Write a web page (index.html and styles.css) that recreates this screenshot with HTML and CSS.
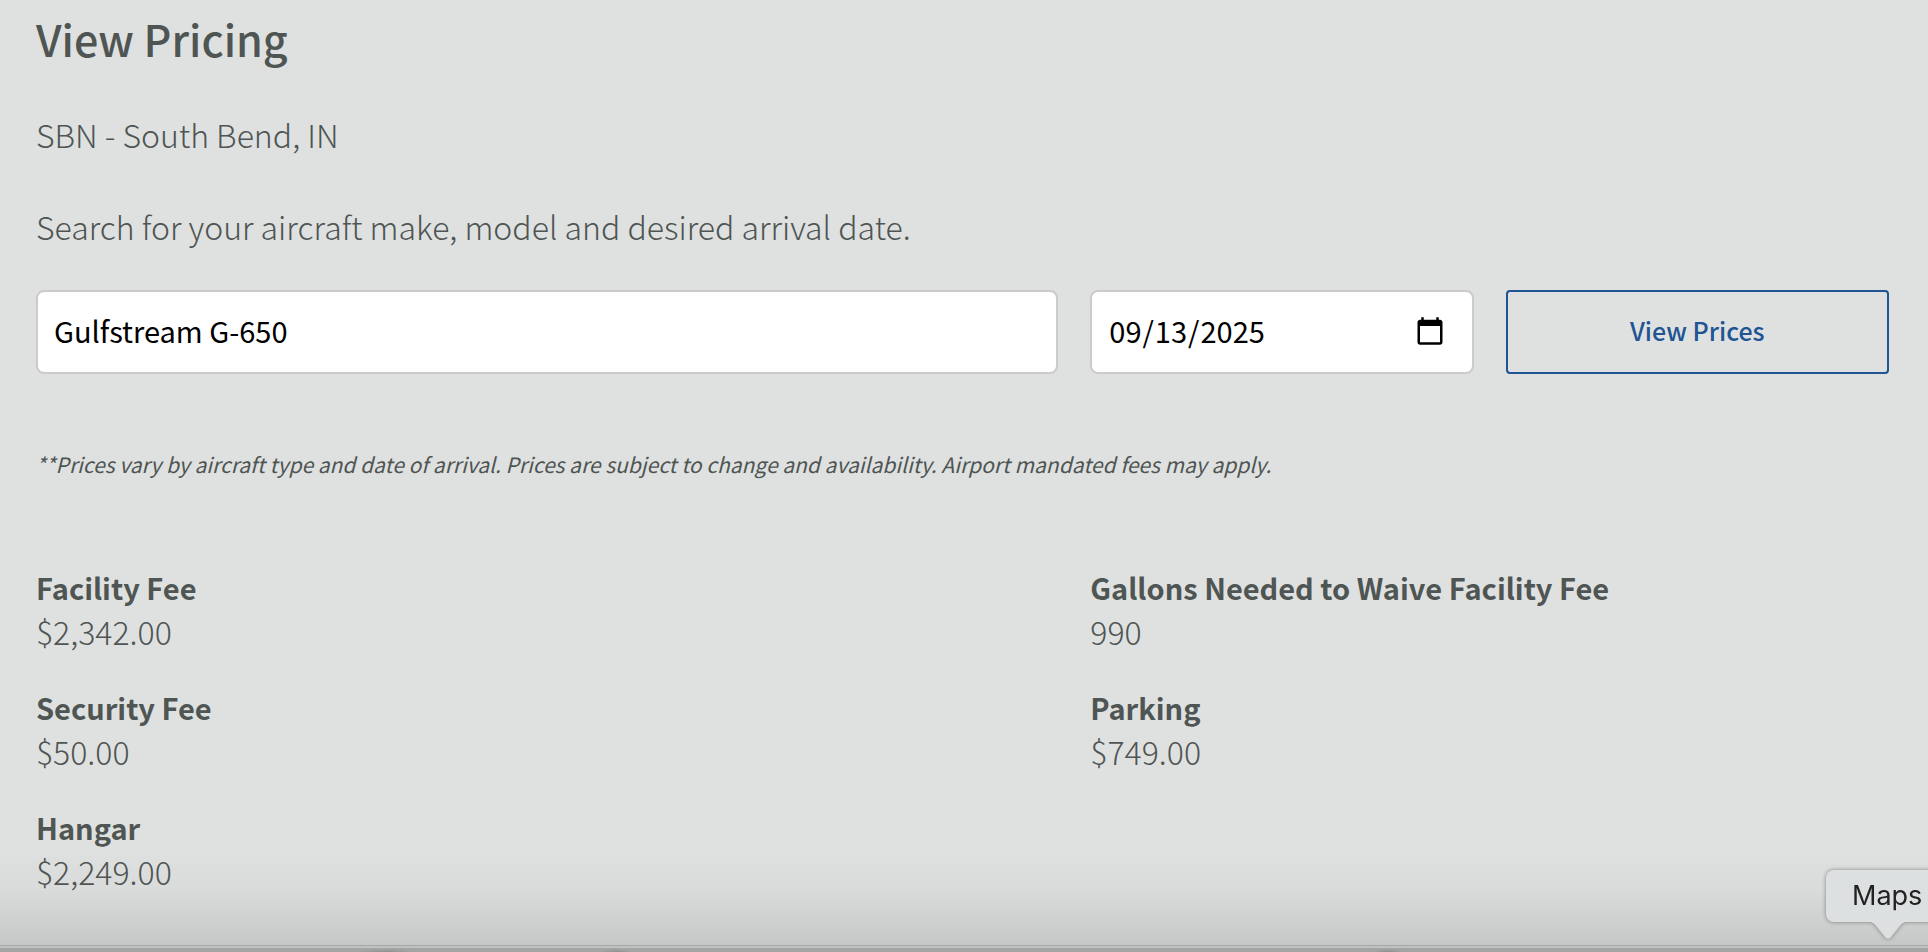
FILE: index.html
```
<!DOCTYPE html>
<html lang="en-US">
<head>
    <meta charset="UTF-8">
    <meta name="viewport" content="width=device-width, initial-scale=1.0">
    <title>View Pricing</title>
    <link rel="stylesheet" href="styles.css">
</head>
<body>
    <main class="pricing">
        <h1>View Pricing</h1>
        <p class="location">SBN - South Bend, IN</p>
        <p class="intro">Search for your aircraft make, model and desired arrival date.</p>

        <!-- Price Search Form -->
        <form class="columns search-form">
            <input type="text" id="aircraft" aria-label="Aircraft make and model" value="Gulfstream G-650">
            <input type="date" id="arrival" aria-label="Arrival date" value="2025-09-13">
            <button type="submit">View Prices</button>
        </form>

        <p class="note">**Prices vary by aircraft type and date of arrival. Prices are subject to change and availability. Airport mandated fees may apply.</p>

        <!-- Fees -->
        <dl class="columns fees">
            <div class="fee">
                <dt>Facility Fee</dt>
                <dd>$2,342.00</dd>
            </div>
            <div class="fee fee-wide">
                <dt>Gallons Needed to Waive Facility Fee</dt>
                <dd>990</dd>
            </div>
            <div class="fee">
                <dt>Security Fee</dt>
                <dd>$50.00</dd>
            </div>
            <div class="fee fee-wide">
                <dt>Parking</dt>
                <dd>$749.00</dd>
            </div>
            <div class="fee">
                <dt>Hangar</dt>
                <dd>$2,249.00</dd>
            </div>
        </dl>
    </main>

    <!-- Dock edge and its tooltip -->
    <div class="dock-shade"></div>
    <div class="dock"></div>
    <div class="tooltip">
        Maps
        <svg class="tooltip-arrow" width="38" height="19" viewBox="0 0 38 19">
            <path d="M0 0V1C4 1 6 3 8 6L16 16Q19 19 22 16L30 6C32 3 34 1 38 1V0Z" fill="#dce0e1"/>
        </svg>
    </div>
</body>
</html>
```

FILE: styles.css
```
* {
    box-sizing: border-box;
}

body {
    margin: 0;
    min-height: 100vh;
    background: #dfe1e0;
    color: #4e5553;
    font-family: "Noto Sans CJK JP", "Noto Sans", sans-serif;
    font-size: 32px;
    font-weight: 300;
    line-height: 44px;
    overflow: hidden;
}

.pricing {
    padding: 8px 39px 0 36px;
}

h1 {
    margin: 0 0 44px;
    font-size: 43px;
    font-weight: 500;
    line-height: 60px;
}

p {
    margin: 0;
}

.location {
    margin-bottom: 48px;
}

.intro {
    margin-bottom: 42px;
}

.columns {
    display: grid;
    grid-template-columns: 8fr 3fr 3fr;
    column-gap: 32px;
}

.search-form {
    margin-bottom: 72px;
}

.search-form input,
.search-form button {
    width: 100%;
    min-width: 0;
    height: 84px;
    font-family: inherit;
}

.search-form input {
    padding: 0 26px 4px 16px;
    border: 2px solid #cacbca;
    border-radius: 8px;
    background: #fff;
    color: #000;
    font-size: 29px;
    font-weight: 400;
}

.search-form input::-webkit-calendar-picker-indicator {
    width: 32px;
    height: 32px;
    margin-top: 4px;
    padding: 0;
}

.search-form button {
    padding: 0 0 4px;
    border: 2px solid #205493;
    border-radius: 4px;
    background: transparent;
    color: #205493;
    font-size: 25px;
    font-weight: 500;
    cursor: pointer;
}

.note {
    margin-bottom: 83px;
    font-size: 21px;
    font-style: italic;
    font-weight: 400;
    line-height: 36px;
}

.fees {
    margin: 0;
    row-gap: 32px;
}

.fee-wide {
    grid-column: span 2;
}

dt {
    font-size: 29px;
    font-weight: 700;
}

dd {
    margin: 0;
}

.dock-shade {
    position: fixed;
    left: 0;
    right: 0;
    bottom: 7px;
    height: 98px;
    background: linear-gradient(rgba(90, 95, 93, 0), rgba(90, 95, 93, 0.03) 40%, rgba(90, 95, 93, 0.19));
    pointer-events: none;
}

.dock {
    position: fixed;
    left: 0;
    right: 0;
    bottom: 0;
    height: 7px;
    border-top: 1px solid #a4a7a6;
    background:
        radial-gradient(28px 3px at 20% 100%, #8f9092, transparent),
        radial-gradient(16px 3px at 32% 100%, #8f9092, transparent),
        radial-gradient(16px 3px at 72% 100%, #8f9092, transparent),
        linear-gradient(#bfc2c0 2px, #a3a4a6 2px);
}

.tooltip {
    position: fixed;
    right: -22px;
    bottom: 30px;
    width: 124px;
    height: 52px;
    padding-left: 26px;
    border-radius: 8px;
    background: #dce0e1;
    color: #222;
    font-family: Inter, sans-serif;
    font-size: 27px;
    font-weight: 400;
    line-height: 52px;
    filter: drop-shadow(0 0 2px rgba(0, 0, 0, 0.4));
}

.tooltip-arrow {
    position: absolute;
    top: 51px;
    left: 43px;
}
```
